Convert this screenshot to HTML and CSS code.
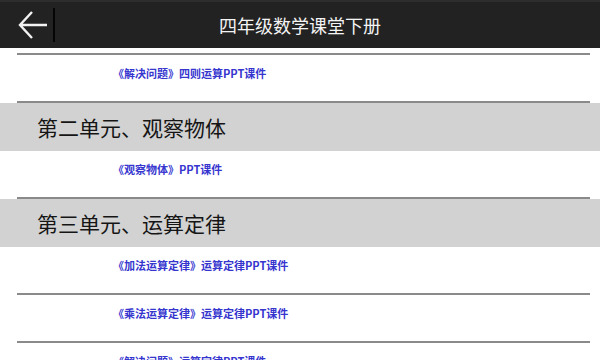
FILE: index.html
```html
<!DOCTYPE html>
<html lang="zh-CN">
<head>
    <meta charset="UTF-8">
    <meta name="viewport" content="width=device-width, initial-scale=1.0">
    <title>四年级数学课堂下册</title>
    <link rel="stylesheet" href="styles.css">
</head>
<body>
    <!-- Top bar -->
    <header class="top-bar">
        <button class="back-btn" aria-label="返回">
            <svg width="32" height="32" viewBox="0 0 32 32" aria-hidden="true">
                <path d="M30 16 H3 M15 3 L3 16 L15 29" fill="none" stroke="#f2f2f2" stroke-width="2.4"/>
            </svg>
        </button>
        <span class="divider"></span>
        <h1 class="title">四年级数学课堂下册</h1>
    </header>

    <main class="lesson-list">
        <div class="list-top-rule"></div>

        <a class="lesson" href="#">《解决问题》四则运算PPT课件</a>

        <h2 class="unit">第二单元、观察物体</h2>
        <a class="lesson" href="#">《观察物体》PPT课件</a>

        <h2 class="unit">第三单元、运算定律</h2>
        <a class="lesson" href="#">《加法运算定律》运算定律PPT课件</a>
        <a class="lesson" href="#">《乘法运算定律》运算定律PPT课件</a>
        <a class="lesson" href="#">《解决问题》运算定律PPT课件</a>
    </main>
</body>
</html>
```

FILE: styles.css
```css
/* Reset */
* {
    margin: 0;
    padding: 0;
    box-sizing: border-box;
}

html, body {
    width: 100%;
    height: 100%;
    overflow: hidden;
    background: #fff;
    font-family: "Noto Sans CJK SC", "Noto Sans", sans-serif;
}

/* Top bar */
.top-bar {
    position: relative;
    display: flex;
    align-items: center;
    height: 48px;
    background: #222;
    border-top: 2px solid #2e2e2e;
}

.back-btn {
    display: flex;
    align-items: center;
    justify-content: center;
    width: 34px;
    height: 34px;
    margin-left: 16px;
    background: none;
    border: none;
}

.divider {
    width: 2px;
    height: 34px;
    margin-left: 3px;
    background: #050505;
}

.title {
    position: absolute;
    left: 0;
    right: 0;
    text-align: center;
    font-size: 18px;
    font-weight: normal;
    color: #f4f4f4;
    pointer-events: none;
}

/* List */
.lesson-list {
    display: flex;
    flex-direction: column;
}

.list-top-rule {
    height: 2px;
    margin: 5px 10px 0 17px;
    background: #8a8a8a;
}

.lesson {
    display: block;
    height: 48px;
    padding: 12px 0 0 96px;
    margin: 0 10px 0 17px;
    border-bottom: 2px solid #8a8a8a;
    font-size: 11px;
    line-height: 12px;
    font-weight: bold;
    color: #3636cf;
    text-decoration: none;
}

.unit {
    height: 48px;
    padding-left: 37px;
    background: #d2d2d2;
    font-size: 21px;
    line-height: 48px;
    font-weight: normal;
    color: #151515;
}
```
